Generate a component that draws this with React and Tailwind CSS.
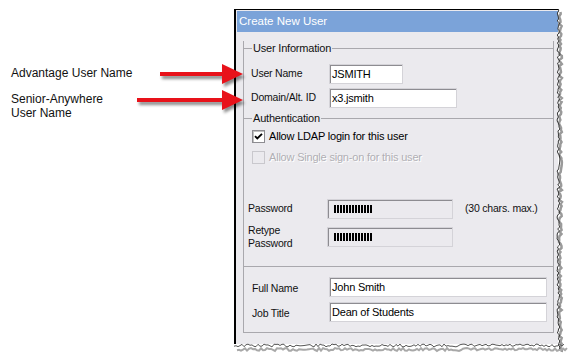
import React from 'react';

// jagged "torn paper" edge, built once from a fixed seed
const tornPoints = (length, seed, amp) => {
    const pts = [];
    let s = seed;
    for (let i = 0; i <= length; i += 2) {
        s = (s * 9301 + 49297) % 233280;
        pts.push([i, (s / 233280) * amp]);
    }
    return pts;
};

const rightEdge = tornPoints(340, 7, 3);
const bottomEdge = tornPoints(330, 13, 3);

const TornEdges = () => (
    <svg className="absolute left-[228px] top-0 pointer-events-none" width="340" height="355" viewBox="0 0 340 355">
        {/* right edge shadow + line */}
        <polyline
            points={rightEdge.map(([y, d]) => `${331 + d},${y + 12}`).join(' ')}
            fill="none"
            stroke="#9a9a9a"
            strokeWidth="2.5"
        />
        <polyline
            points={rightEdge.map(([y, d]) => `${329 + d},${y + 9}`).join(' ')}
            fill="none"
            stroke="#3a3a3a"
            strokeWidth="1"
        />
        {/* bottom edge shadow + line */}
        <polyline
            points={bottomEdge.map(([x, d]) => `${x + 9},${348 + d}`).join(' ')}
            fill="none"
            stroke="#a8a8a8"
            strokeWidth="2"
        />
        <polyline
            points={bottomEdge.map(([x, d]) => `${x + 6},${344 + d}`).join(' ')}
            fill="none"
            stroke="#555"
            strokeWidth="1"
        />
    </svg>
);

const Arrow = ({ top, left, width }) => (
    <svg
        className="absolute drop-shadow-[2px_3px_1.5px_rgba(0,0,0,0.45)]"
        style={{ top, left }}
        width={width}
        height="22"
        viewBox={`0 0 ${width} 22`}
    >
        <rect x="0" y="9" width={width - 20} height="4" fill="#e8121a" />
        <polygon points={`${width - 21},1 ${width},11 ${width - 21},21`} fill="#e8121a" />
    </svg>
);

const Legend = ({ children }) => (
    <div className="flex items-center h-[14px]">
        <div className="w-[8px] border-t border-[#a9a8ad]" />
        <span className="px-px leading-[14px] text-[11px]">{children}</span>
        <div className="flex-1 border-t border-[#a9a8ad]" />
    </div>
);

const TextBox = ({ value, className }) => (
    <div
        className={`h-[20px] bg-white border border-[#d4d3d8] shadow-[inset_1px_1px_0_#8d8c91] pl-[2px] flex items-center text-[11px] text-black ${className}`}
    >
        {value}
    </div>
);

const MaskBox = () => (
    <div className="h-[20px] w-[126px] bg-[#ebeaee] border border-[#d4d3d8] shadow-[inset_1px_1px_0_#8d8c91] pl-[6px] flex items-center gap-px">
        {Array.from({ length: 13 }).map((_, i) => (
            <div key={i} className="w-[2px] h-[8px] bg-black" />
        ))}
    </div>
);

const Checkbox = ({ checked, disabled, label }) => (
    <div className="flex items-center h-[13px]">
        <div
            className={`w-[13px] h-[13px] flex items-center justify-center ${
                disabled
                    ? 'bg-[#ebeaee] border border-[#c9c8cd]'
                    : 'bg-white border border-[#8d8c91] shadow-[inset_1px_1px_0_#c0c0c0]'
            }`}
        >
            {checked && (
                <svg width="9" height="9" viewBox="0 0 9 9">
                    <polyline points="1,4.2 3.3,6.5 8,1.8" fill="none" stroke="#000" strokeWidth="1.9" />
                </svg>
            )}
        </div>
        <span
            className={`ml-[4px] text-[11px] ${
                disabled ? 'text-[#b0afb4] [text-shadow:1px_1px_0_#fff]' : 'text-black'
            }`}
        >
            {label}
        </span>
    </div>
);

export default function App() {
    return (
        <div className="relative w-[568px] h-[355px] bg-white overflow-hidden flex font-['Liberation_Sans',Arial,sans-serif] tracking-[-0.2px]">
            {/* callout labels */}
            <div className="w-[234px] shrink-0 pl-[11px] pt-[66px] text-[12px] leading-[14px] text-[#111] tracking-normal">
                <div>Advantage User Name</div>
                <div className="mt-[12px]">
                    Senior-Anywhere
                    <br />
                    User Name
                </div>
            </div>

            {/* dialog */}
            <div className="mt-[9px] w-[324px] h-[335px] shrink-0 border-t border-black border-l-2 bg-[#ebeaee] flex flex-col text-[#111]">
                <div className="mt-px ml-px h-[21px] bg-[#7ba3d9] text-white text-[11.5px] pl-[2px] flex items-center tracking-normal">
                    Create New User
                </div>

                <div className="mt-[9px] ml-[7px] mr-[4px] border-l border-r border-b border-[#a9a8ad]">
                    {/* user information */}
                    <Legend>User Information</Legend>
                    <div className="pl-[7px] pt-[9px] pb-[3px] flex flex-col gap-[4px] text-[10.5px]">
                        <div className="flex items-center">
                            <span className="w-[78px]">User Name</span>
                            <TextBox value="JSMITH" className="w-[74px] text-[11.5px]" />
                        </div>
                        <div className="flex items-center">
                            <span className="w-[78px]">Domain/Alt. ID</span>
                            <TextBox value="x3.jsmith" className="w-[128px]" />
                        </div>
                    </div>

                    {/* authentication */}
                    <Legend>Authentication</Legend>
                    <div className="pl-[8px] pt-[5px] flex flex-col gap-[8px]">
                        <Checkbox checked label="Allow LDAP login for this user" />
                        <Checkbox disabled label="Allow Single sign-on  for this user" />
                    </div>
                    <div className="pl-[4px] pt-[35px] pb-[16px] flex flex-col gap-[5px] text-[10.5px]">
                        <div className="flex items-center h-[20px]">
                            <span className="w-[79px]">Password</span>
                            <MaskBox />
                            <span className="ml-[12px]">(30 chars. max.)</span>
                        </div>
                        <div className="flex items-center">
                            <span className="w-[79px] leading-[13px]">
                                Retype
                                <br />
                                Password
                            </span>
                            <MaskBox />
                        </div>
                    </div>

                    {/* name / title */}
                    <div className="border-t border-[#a9a8ad] pl-[8px] pt-[10px] pb-[10px] flex flex-col gap-[5px] text-[10.5px]">
                        <div className="flex items-center">
                            <span className="w-[77px] pt-[3px]">Full Name</span>
                            <TextBox value="John Smith" className="w-[218px] h-[19px]" />
                        </div>
                        <div className="flex items-center">
                            <span className="w-[77px] pt-[4px]">Job Title</span>
                            <TextBox value="Dean of Students" className="w-[218px] h-[19px]" />
                        </div>
                    </div>
                </div>
            </div>

            <div className="flex-1" />

            <TornEdges />
            <Arrow top={63} left={160} width={83} />
            <Arrow top={89} left={137} width={106} />
        </div>
    );
}
